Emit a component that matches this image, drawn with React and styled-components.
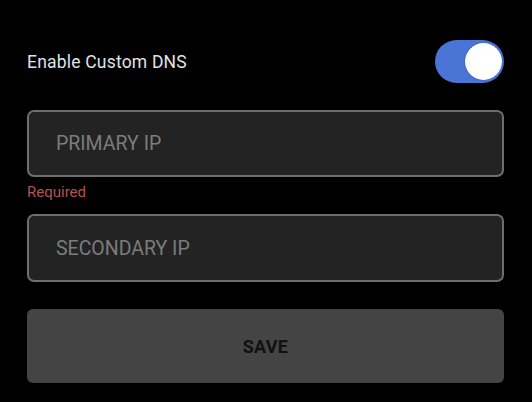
import * as React from "react"
import styled, { createGlobalStyle } from "styled-components"

const GlobalStyle = createGlobalStyle`
  html, body {
    margin: 0;
    padding: 0;
    background: #000;
  }
  body {
    font-family: Roboto, "Liberation Sans", sans-serif;
  }
`

const Screen = styled.div`
  width: 532px;
  height: 402px;
  box-sizing: border-box;
  padding: 40px 28px 0 27px;
  background: #000;
  display: flex;
  flex-direction: column;
`

const SwitchRow = styled.div`
  display: flex;
  align-items: center;
  justify-content: space-between;
  height: 43px;
  margin-bottom: 27px;
`

const Label = styled.span`
  color: #e2e2e2;
  font-size: 17.5px;
  letter-spacing: 0.2px;
`

const Track = styled.button`
  width: 69px;
  height: 43px;
  border: none;
  padding: 0 2px 0 0;
  border-radius: 22px;
  background: ${(p) => (p.$on ? "#4a74d6" : "#555")};
  display: flex;
  align-items: center;
  justify-content: ${(p) => (p.$on ? "flex-end" : "flex-start")};
  cursor: pointer;
`

const Knob = styled.span`
  width: 37px;
  height: 37px;
  border-radius: 50%;
  background: #fff;
  box-shadow: 0 0 2px rgba(0, 0, 0, 0.3);
`

const Field = styled.input`
  box-sizing: border-box;
  width: 100%;
  height: ${(p) => p.$h}px;
  background: #232323;
  border: 2px solid #6e6e6e;
  border-radius: 7px;
  padding: 0 27px;
  color: #ddd;
  font-family: Roboto, "Liberation Sans", sans-serif;
  font-size: 19.5px;
  outline: none;
  &::placeholder {
    color: #7c7c7c;
  }
`

const ErrorText = styled.div`
  color: #b9504f;
  font-size: 15px;
  line-height: 18px;
  margin: 6px 0 13px;
`

const SaveButton = styled.button`
  margin-top: 27px;
  height: 74px;
  width: 100%;
  border: none;
  border-radius: 6px;
  background: #444;
  color: #111;
  font-family: Roboto, "Liberation Sans", sans-serif;
  font-weight: 700;
  font-size: 18px;
  letter-spacing: 0.3px;
  cursor: pointer;
`

export default function App() {
  const [on, setOn] = React.useState(true)
  return (
    <>
      <GlobalStyle />
      <Screen>
        <SwitchRow>
          <Label>Enable Custom DNS</Label>
          <Track $on={on} onClick={() => setOn((v) => !v)}>
            <Knob />
          </Track>
        </SwitchRow>
        <Field $h={67} placeholder="PRIMARY IP" />
        <ErrorText>Required</ErrorText>
        <Field $h={68} placeholder="SECONDARY IP" />
        <SaveButton>SAVE</SaveButton>
      </Screen>
    </>
  )
}
